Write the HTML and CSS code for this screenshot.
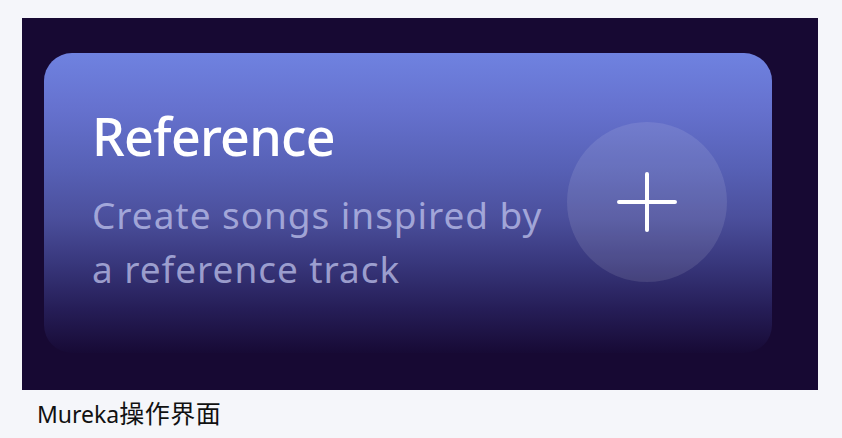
FILE: index.html
```html
<!DOCTYPE html>
<html lang="zh">
<head>
<meta charset="utf-8">
<title>Mureka操作界面</title>
<link rel="stylesheet" href="styles.css">
</head>
<body>
<figure class="shot">
  <div class="panel">
    <div class="card">
      <div class="card-text">
        <h2 class="card-title">Reference</h2>
        <p class="card-desc">Create songs inspired by<br>a reference track</p>
      </div>
      <button class="add-btn" aria-label="Add reference">
        <svg class="plus" viewBox="0 0 60 60" width="60" height="60">
          <path d="M30 2 V58 M2 30 H58" stroke="#ffffff" stroke-width="4" stroke-linecap="round" fill="none"/>
        </svg>
      </button>
    </div>
  </div>
  <figcaption class="caption">Mureka<span class="caption-cn">操作界面</span></figcaption>
</figure>
</body>
</html>
```

FILE: styles.css
```css
html, body {
  margin: 0;
  padding: 0;
}
body {
  background: #f5f6fa;
  width: 842px;
  height: 438px;
  overflow: hidden;
}
.shot {
  margin: 0;
  padding: 18px 24px 0 22px;
}
.panel {
  width: 796px;
  height: 372px;
  box-sizing: border-box;
  background: #170933;
  padding: 35px 46px 0 22px;
}
.card {
  height: 300px;
  box-sizing: border-box;
  border-radius: 28px;
  background: linear-gradient(180deg,
    #6f82e0 0%,
    #6672cf 18%,
    #5761b6 38%,
    #4b4f9c 55%,
    #38377c 70%,
    #261e58 85%,
    #170a35 100%);
  display: flex;
  align-items: flex-start;
  justify-content: space-between;
  padding: 53px 45px 0 48px;
}
.card-text {
  font-family: "Noto Sans", "Open Sans", sans-serif;
}
.card-title {
  margin: 0 0 22px;
  font-size: 52px;
  line-height: 60px;
  font-weight: 500;
  color: #ffffff;
  letter-spacing: -0.8px;
}
.card-desc {
  margin: 0;
  font-size: 37px;
  line-height: 54px;
  font-weight: 400;
  color: rgba(196, 200, 240, 0.72);
  letter-spacing: 0.95px;
}
.add-btn {
  flex: none;
  width: 160px;
  height: 160px;
  border-radius: 50%;
  border: none;
  padding: 0;
  background: rgba(255, 255, 255, 0.1);
  display: flex;
  align-items: center;
  justify-content: center;
  margin-top: 16px;
}
.caption {
  margin: 0;
  padding: 9px 0 0 15px;
  font-family: "Noto Sans", "Noto Sans CJK SC", sans-serif;
  font-size: 23px;
  line-height: 28px;
  color: #111111;
}
.caption-cn {
  font-size: 25px;
  letter-spacing: 0.5px;
}
```
